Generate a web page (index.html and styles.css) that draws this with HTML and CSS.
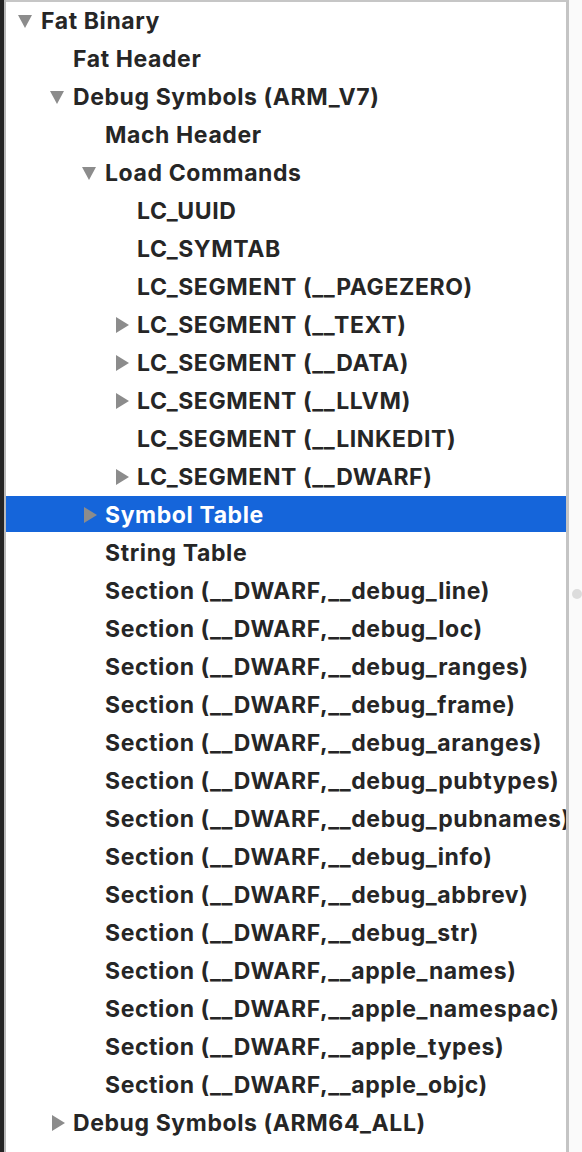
FILE: index.html
```html
<!DOCTYPE html>
<html>
<head>
<meta charset="utf-8">
<link rel="stylesheet" href="styles.css">
</head>
<body>
<div class="window">
  <div class="edge"></div>
  <div class="outline">
    <div class="row l0"><span class="tg open"></span><span class="lbl">Fat Binary</span></div>
    <div class="row l1"><span class="tg"></span><span class="lbl">Fat Header</span></div>
    <div class="row l1"><span class="tg open"></span><span class="lbl">Debug Symbols (ARM_V7)</span></div>
    <div class="row l2"><span class="tg"></span><span class="lbl">Mach Header</span></div>
    <div class="row l2"><span class="tg open"></span><span class="lbl">Load Commands</span></div>
    <div class="row l3"><span class="tg"></span><span class="lbl">LC_UUID</span></div>
    <div class="row l3"><span class="tg"></span><span class="lbl">LC_SYMTAB</span></div>
    <div class="row l3"><span class="tg"></span><span class="lbl">LC_SEGMENT (__PAGEZERO)</span></div>
    <div class="row l3"><span class="tg closed"></span><span class="lbl">LC_SEGMENT (__TEXT)</span></div>
    <div class="row l3"><span class="tg closed"></span><span class="lbl">LC_SEGMENT (__DATA)</span></div>
    <div class="row l3"><span class="tg closed"></span><span class="lbl">LC_SEGMENT (__LLVM)</span></div>
    <div class="row l3"><span class="tg"></span><span class="lbl">LC_SEGMENT (__LINKEDIT)</span></div>
    <div class="row l3"><span class="tg closed"></span><span class="lbl">LC_SEGMENT (__DWARF)</span></div>
    <div class="row l2 selected"><span class="tg closed"></span><span class="lbl">Symbol Table</span></div>
    <div class="row l2"><span class="tg"></span><span class="lbl">String Table</span></div>
    <div class="row l2"><span class="tg"></span><span class="lbl">Section (__DWARF,__debug_line)</span></div>
    <div class="row l2"><span class="tg"></span><span class="lbl">Section (__DWARF,__debug_loc)</span></div>
    <div class="row l2"><span class="tg"></span><span class="lbl">Section (__DWARF,__debug_ranges)</span></div>
    <div class="row l2"><span class="tg"></span><span class="lbl">Section (__DWARF,__debug_frame)</span></div>
    <div class="row l2"><span class="tg"></span><span class="lbl">Section (__DWARF,__debug_aranges)</span></div>
    <div class="row l2"><span class="tg"></span><span class="lbl">Section (__DWARF,__debug_pubtypes)</span></div>
    <div class="row l2"><span class="tg"></span><span class="lbl">Section (__DWARF,__debug_pubnames)</span></div>
    <div class="row l2"><span class="tg"></span><span class="lbl">Section (__DWARF,__debug_info)</span></div>
    <div class="row l2"><span class="tg"></span><span class="lbl">Section (__DWARF,__debug_abbrev)</span></div>
    <div class="row l2"><span class="tg"></span><span class="lbl">Section (__DWARF,__debug_str)</span></div>
    <div class="row l2"><span class="tg"></span><span class="lbl">Section (__DWARF,__apple_names)</span></div>
    <div class="row l2"><span class="tg"></span><span class="lbl">Section (__DWARF,__apple_namespac)</span></div>
    <div class="row l2"><span class="tg"></span><span class="lbl">Section (__DWARF,__apple_types)</span></div>
    <div class="row l2"><span class="tg"></span><span class="lbl">Section (__DWARF,__apple_objc)</span></div>
    <div class="row l1"><span class="tg closed"></span><span class="lbl">Debug Symbols (ARM64_ALL)</span></div>
  </div>
  <div class="scroller"><span class="knob"></span></div>
</div>
</body>
</html>
```
FILE: styles.css
```css
html, body {
  margin: 0;
  padding: 0;
  background: #ffffff;
}
.window {
  display: flex;
  width: 582px;
  height: 1152px;
  overflow: hidden;
}
.edge {
  width: 4px;
  flex: none;
  background: #242424;
  border-right: 2px solid #b9b9b9;
}
.outline {
  flex: 1;
  min-width: 0;
  border-top: 2px solid #c6c6c6;
  border-right: 3px solid #c4c4c4;
  display: flex;
  flex-direction: column;
  gap: 2px;
  overflow: hidden;
  font-family: Inter, "Noto Sans", sans-serif;
  font-weight: 700;
  font-size: 23px;
  letter-spacing: 0.6px;
  color: #262626;
}
.row {
  height: 36px;
  display: flex;
  align-items: center;
  flex: none;
  white-space: nowrap;
}
.lbl {
  padding-top: 2px;
}
.row.l0 { padding-left: 12px; }
.row.l1 { padding-left: 44px; }
.row.l2 { padding-left: 76px; }
.row.l3 { padding-left: 108px; }
.row.selected {
  background: #1565da;
  color: #ffffff;
}
.tg {
  width: 23px;
  height: 16px;
  flex: none;
  position: relative;
  top: 1px;
}
.tg.open::before {
  content: "";
  position: absolute;
  left: 0;
  top: 2px;
  border-left: 7px solid transparent;
  border-right: 7px solid transparent;
  border-top: 13px solid #8c8c8c;
}
.tg.closed::before {
  content: "";
  position: absolute;
  left: 2px;
  top: 0;
  border-top: 8px solid transparent;
  border-bottom: 8px solid transparent;
  border-left: 13px solid #8c8c8c;
}
.scroller {
  width: 13px;
  flex: none;
  background: #fafafa;
  position: relative;
}
.knob {
  position: absolute;
  left: 3px;
  top: 589px;
  width: 10px;
  height: 10px;
  border-radius: 50%;
  background: #dcdcdc;
}
```
